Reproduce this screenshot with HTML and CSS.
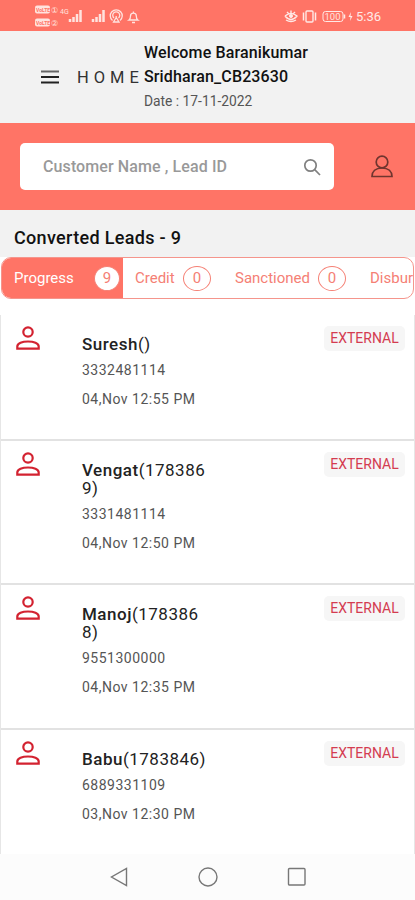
FILE: index.html
```html
<!DOCTYPE html>
<html lang="en">
<head>
    <meta charset="UTF-8">
    <meta name="viewport" content="width=device-width, initial-scale=1.0">
    <title>Converted Leads</title>
    <link rel="stylesheet" href="styles.css">
</head>
<body>
    <div class="status-bar">
        <svg class="status-left" width="106" height="24" viewBox="0 0 106 24" fill="none" stroke="#ffe3df">
            <rect x="1" y="1.500" width="15" height="8" rx="2" fill="#ffe3df" stroke="none"/>
            <rect x="1" y="14.500" width="15" height="8" rx="2" fill="#ffe3df" stroke="none"/>
            <text class="hd" x="2" y="7.500">VoLTE</text>
            <text class="hd" x="2" y="20.500">VoLTE</text>
            <text class="sim" x="16.500" y="9">①</text>
            <text class="sim" x="16.500" y="22">②</text>
            <text class="net" x="26" y="10">4G</text>
            <path d="M36 18v-3M39.500 18v-5M43 18v-8M46.500 18V6" stroke-width="2.500"/>
            <path d="M59 18v-3M62.500 18v-5M66 18v-8M69.500 18V6" stroke-width="2.500"/>
            <path d="M78.500 16.500a6 6 0 1 1 7.500 0M80 14a3.500 3.500 0 1 1 4.500 0M82.200 12v1M79.500 18l2.700-4.500L85 18z" stroke-width="1.300"/>
            <path d="M95 16c1.500-1 1.500-2 1.500-4a2.900 2.900 0 0 1 5.800 0c0 2 0 3 1.500 4zM98 18.500h3M99.400 9V7.500" stroke-width="1.300"/>
        </svg>
        <svg class="status-right" width="74" height="20" viewBox="0 0 74 20" fill="none" stroke="#ffe9e6">
            <path d="M1 10q6-5 12 0q-6 7-12 0M2 14q5 3 10 0M3 6l1.500 1.500M7 4.500V7M11 6L9.500 7.500" stroke-width="1.400"/>
            <circle cx="7" cy="10" r="1.500" fill="#ffe9e6"/>
            <rect x="22" y="5" width="7" height="11" rx="1" stroke-width="1.400"/>
            <path d="M19.500 6.500v8M31.500 6.500v8" stroke-width="1.500"/>
            <rect x="39" y="5.500" width="20" height="10" rx="2.500" stroke-width="1"/>
            <path d="M60.500 8.500v4" stroke-width="1.500"/>
            <text class="battery" x="40.500" y="14">100</text>
            <path d="M67 6l-2.500 5h2L66 15l2.500-5h-2z" fill="#ffe9e6" stroke="none"/>
        </svg>
        <span class="time">5:36</span>
    </div>

    <div class="header">
        <svg class="menu-icon" width="18" height="14" viewBox="0 0 18 14" stroke-width="2">
            <path d="M0 1.500h18" stroke="#666"/>
            <path d="M0 7h18M0 12.500h18" stroke="#222"/>
        </svg>
        <div class="page-name">HOME</div>
        <div class="welcome">
            <div class="user">Welcome Baranikumar</div>
            <div class="user user-id">Sridharan_CB23630</div>
            <div class="date">Date : 17-11-2022</div>
        </div>
    </div>

    <div class="search-bar">
        <div class="search-box">
            <span>Customer Name , Lead ID</span>
            <svg width="18" height="18" viewBox="0 0 18 18" fill="none" stroke="#808080" stroke-width="1.700">
                <circle cx="7.500" cy="7.500" r="5.700"/>
                <path d="M11.700 11.700L17 17"/>
            </svg>
        </div>
        <svg class="profile-icon" width="22" height="23" viewBox="0 0 22 23" fill="none" stroke="#70352f" stroke-width="1.700">
            <circle cx="11" cy="7" r="5.800"/>
            <path d="M1 21.500c0-5 3.500-8.500 10-8.500s10 3.500 10 8.500z"/>
        </svg>
    </div>

    <h1>Converted Leads - 9</h1>

    <div class="content">
        <div class="tabs">
            <div class="tab active">Progress <span class="count">9</span></div>
            <div class="tab credit">Credit <span class="count">0</span></div>
            <div class="tab sanctioned">Sanctioned <span class="count">0</span></div>
            <div class="tab">Disbursed</div>
        </div>

        <div class="leads" id="leads"></div>
    </div>

    <div class="nav-bar">
        <svg width="18" height="20" viewBox="0 0 18 20"><path d="M16.500 1.500v17L1.500 10z"/></svg>
        <svg width="20" height="20" viewBox="0 0 20 20"><circle cx="10" cy="10" r="9"/></svg>
        <svg width="20" height="20" viewBox="0 0 20 20"><rect x="1.500" y="1.500" width="16.500" height="16.500" rx="1"/></svg>
    </div>

    <script>
        const leads = [
            { name: 'Suresh', id: '()', phone: '3332481114', date: '04,Nov 12:55 PM' },
            { name: 'Vengat', id: '(1783869)', phone: '3331481114', date: '04,Nov 12:50 PM' },
            { name: 'Manoj', id: '(1783868)', phone: '9551300000', date: '04,Nov 12:35 PM' },
            { name: 'Babu', id: '(1783846)', phone: '6889331109', date: '03,Nov 12:30 PM' }
        ];

        document.getElementById('leads').innerHTML = leads.map(lead => `
            <div class="lead">
                <svg class="lead-icon" width="24" height="24" viewBox="0 0 24 24">
                    <circle cx="12" cy="6" r="4.700"/>
                    <path d="M1.300 22.700v-2.200c0-3.200 5-5 10.700-5s10.700 1.800 10.700 5v2.200z"/>
                </svg>
                <div class="lead-info">
                    <div class="lead-name"><b>${lead.name}</b>${lead.id}</div>
                    <div class="lead-phone">${lead.phone}</div>
                    <div class="lead-date">${lead.date}</div>
                </div>
                <span class="badge">EXTERNAL</span>
            </div>`).join('');
    </script>
</body>
</html>
```
FILE: styles.css
```css
* {
    box-sizing: border-box;
}

body {
    font-family: Roboto, "Liberation Sans", sans-serif;
    background-color: #f2f2f2;
    margin: 0;
    height: 900px;
    overflow: hidden;
    display: flex;
    flex-direction: column;
}

svg {
    flex-shrink: 0;
}

/* Status bar */
.status-bar {
    display: flex;
    align-items: center;
    height: 31px;
    padding: 1px 34px 0 34px;
    background-color: #ff7466;
    color: #ffe9e6;
}

.status-right {
    margin-left: auto;
}

.status-bar text {
    stroke: none;
    fill: #ffe3df;
}

.status-bar .hd {
    font-size: 5px;
    font-weight: bold;
    fill: #ff7466;
}

.status-bar .sim {
    font-size: 8px;
}

.status-bar .net {
    font-size: 7px;
}

.status-bar .battery {
    font-size: 9.5px;
}

.time {
    font-size: 13px;
    margin-left: -2px;
}

/* Header */
.header {
    display: flex;
    align-items: center;
    height: 92px;
    padding-left: 41px;
}

.page-name {
    width: 67px;
    margin-left: 18px;
    font-size: 16.5px;
    letter-spacing: 5px;
    color: #333;
}

.user {
    font-size: 16px;
    font-weight: 500;
    line-height: 24px;
    letter-spacing: 0.13px;
    color: #111;
    white-space: nowrap;
}

.date {
    font-size: 13.8px;
    line-height: 24px;
    color: #555;
}

/* Search */
.search-bar {
    display: flex;
    align-items: center;
    justify-content: space-between;
    height: 87px;
    padding: 0 22px 0 20px;
    background-color: #ff7466;
}

.search-box {
    display: flex;
    align-items: center;
    justify-content: space-between;
    width: 314px;
    height: 47px;
    padding: 0 13px 0 23px;
    border-radius: 5px;
    background-color: white;
    font-size: 16px;
    font-weight: 500;
    letter-spacing: 0.1px;
    color: #999;
}

h1 {
    margin: 0;
    height: 47px;
    padding: 4px 0 0 14px;
    font-size: 18px;
    font-weight: 500;
    line-height: 47px;
    letter-spacing: 0.32px;
    color: #111;
}

/* Tabs */
.content {
    flex: 1;
    min-height: 0;
    overflow: hidden;
    background-color: white;
}

.tabs {
    display: flex;
    height: 42px;
    margin: 0 1px;
    border: 1.5px solid #f5958c;
    border-radius: 10px;
    overflow: hidden;
    white-space: nowrap;
}

.tab {
    display: flex;
    align-items: center;
    justify-content: space-between;
    flex-shrink: 0;
    padding: 0 12px;
    font-size: 15px;
    color: #f58075;
}

.tab.active {
    width: 121px;
    padding-right: 3px;
    background-color: #ff7466;
    color: white;
}

.tab.credit {
    width: 100px;
}

.tab.sanctioned {
    width: 135px;
}

.count {
    width: 28px;
    height: 25px;
    border: 1px solid #f58075;
    border-radius: 50%;
    line-height: 23px;
    text-align: center;
}

.active .count {
    width: 26px;
    background-color: white;
    color: #f58075;
}

/* Leads */
.leads {
    margin-top: 16px;
    border: solid #e6e6e6;
    border-width: 0 1px;
}

.lead {
    display: flex;
    align-items: flex-start;
    padding: 11px 9px 0 15px;
    border-bottom: 2px solid #e2e2e2;
}

.lead:last-child {
    border-bottom: 1px solid #f2f2f2;
}

.lead-icon {
    fill: none;
    stroke: #d32230;
    stroke-width: 2.2;
}

.lead-info {
    width: 128px;
    margin: 9px 0 30.2px 42px;
    font-size: 14px;
    letter-spacing: 0.5px;
    color: #555;
}

.lead-name {
    font-size: 17px;
    line-height: 18px;
    word-break: break-all;
    color: #222;
}

.lead-name b {
    font-weight: 500;
}

.lead-phone {
    margin-top: 7px;
    line-height: 20px;
}

.lead-date {
    margin-top: 9px;
    line-height: 20px;
    white-space: nowrap;
}

.badge {
    margin-left: auto;
    width: 81px;
    height: 25px;
    border-radius: 5px;
    background-color: #f6f6f6;
    font-size: 14px;
    line-height: 25px;
    text-align: center;
    color: #d43c50;
}

/* Android navigation */
.nav-bar {
    display: flex;
    align-items: center;
    gap: 69.5px;
    height: 46px;
    padding-left: 110px;
    background-color: #fcfcfc;
}

.nav-bar svg {
    fill: none;
    stroke: #777;
    stroke-width: 1.4;
}
```
